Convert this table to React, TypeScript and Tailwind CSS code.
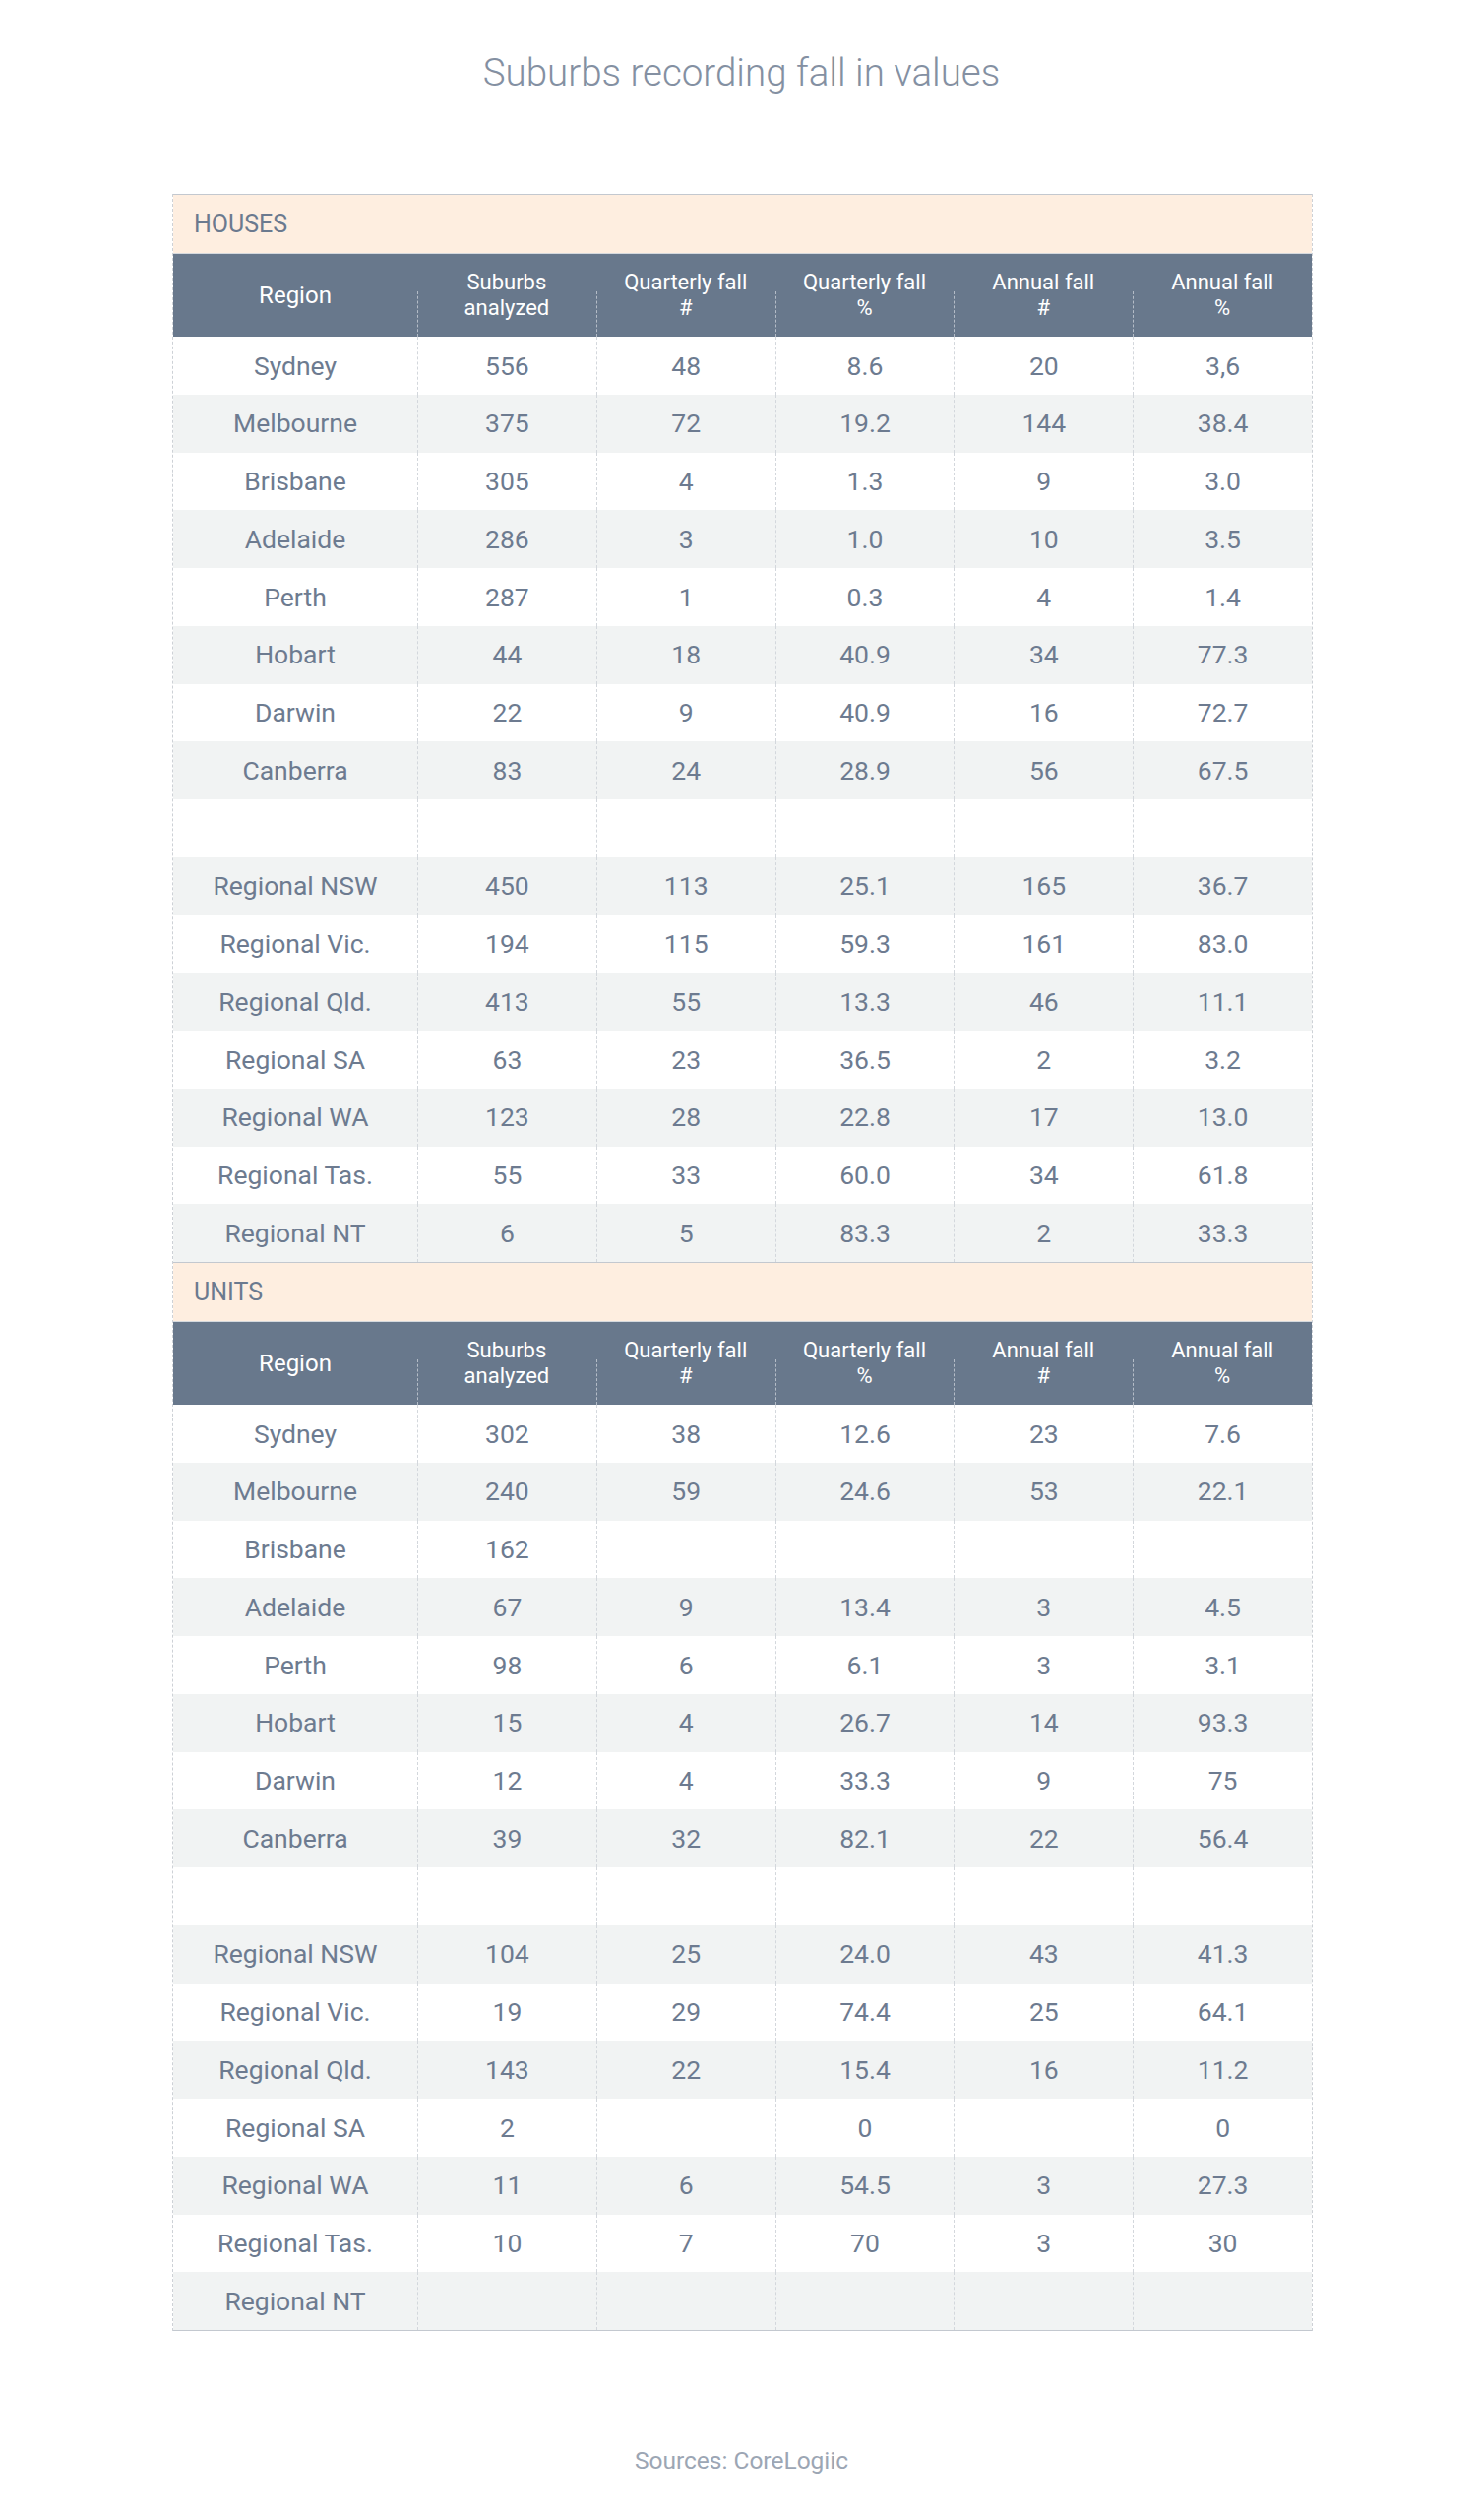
import React from 'react';

type Row = [string, string, string, string, string, string];

const HOUSES: Row[] = [
  ['Sydney', '556', '48', '8.6', '20', '3,6'],
  ['Melbourne', '375', '72', '19.2', '144', '38.4'],
  ['Brisbane', '305', '4', '1.3', '9', '3.0'],
  ['Adelaide', '286', '3', '1.0', '10', '3.5'],
  ['Perth', '287', '1', '0.3', '4', '1.4'],
  ['Hobart', '44', '18', '40.9', '34', '77.3'],
  ['Darwin', '22', '9', '40.9', '16', '72.7'],
  ['Canberra', '83', '24', '28.9', '56', '67.5'],
  ['', '', '', '', '', ''],
  ['Regional NSW', '450', '113', '25.1', '165', '36.7'],
  ['Regional Vic.', '194', '115', '59.3', '161', '83.0'],
  ['Regional Qld.', '413', '55', '13.3', '46', '11.1'],
  ['Regional SA', '63', '23', '36.5', '2', '3.2'],
  ['Regional WA', '123', '28', '22.8', '17', '13.0'],
  ['Regional Tas.', '55', '33', '60.0', '34', '61.8'],
  ['Regional NT', '6', '5', '83.3', '2', '33.3'],
];

const UNITS: Row[] = [
  ['Sydney', '302', '38', '12.6', '23', '7.6'],
  ['Melbourne', '240', '59', '24.6', '53', '22.1'],
  ['Brisbane', '162', '', '', '', ''],
  ['Adelaide', '67', '9', '13.4', '3', '4.5'],
  ['Perth', '98', '6', '6.1', '3', '3.1'],
  ['Hobart', '15', '4', '26.7', '14', '93.3'],
  ['Darwin', '12', '4', '33.3', '9', '75'],
  ['Canberra', '39', '32', '82.1', '22', '56.4'],
  ['', '', '', '', '', ''],
  ['Regional NSW', '104', '25', '24.0', '43', '41.3'],
  ['Regional Vic.', '19', '29', '74.4', '25', '64.1'],
  ['Regional Qld.', '143', '22', '15.4', '16', '11.2'],
  ['Regional SA', '2', '', '0', '', '0'],
  ['Regional WA', '11', '6', '54.5', '3', '27.3'],
  ['Regional Tas.', '10', '7', '70', '3', '30'],
  ['Regional NT', '', '', '', '', ''],
];

const HEADERS: [string, string][] = [
  ['Suburbs', 'analyzed'],
  ['Quarterly fall', '#'],
  ['Quarterly fall', '%'],
  ['Annual fall', '#'],
  ['Annual fall', '%'],
];

function Section({ title, rows }: { title: string; rows: Row[] }) {
  return (
    <div className="border-t border-[#c3c8cf]">
      {/* Section band */}
      <div className="h-[60px] flex items-center pl-[21px] bg-[#feeee0] border-b border-[#d5d9de] text-[25px] text-[#6b7a8f]">
        {title}
      </div>

      {/* Column header */}
      <div className="grid grid-cols-[248px_repeat(5,1fr)] h-[84px] bg-[#68788c] text-white text-[22px] leading-[26px]">
        <div className="flex items-center justify-center text-[24px]">Region</div>
        {HEADERS.map(([a, b], i) => (
          <div
            key={i}
            className="relative flex flex-col items-center justify-center before:absolute before:left-0 before:top-[38px] before:bottom-0 before:border-l before:border-dashed before:border-[#b4bcc7]"
          >
            <span>{a}</span>
            <span>{b}</span>
          </div>
        ))}
      </div>

      {/* Body rows */}
      {rows.map((row, r) => (
        <div
          key={r}
          className={`grid grid-cols-[248px_repeat(5,1fr)] h-[58.75px] text-[26.5px] text-[#6d7b90] ${
            r % 2 === 1 ? 'bg-[#f1f3f3]' : 'bg-white'
          }`}
        >
          {row.map((cell, c) => (
            <div
              key={c}
              className={`flex items-center justify-center ${c > 0 ? 'border-l border-dashed border-[#d3d7dc]' : ''}`}
            >
              {cell}
            </div>
          ))}
        </div>
      ))}
    </div>
  );
}

export default function App() {
  return (
    <div className="w-[1507px] min-h-[2560px] bg-white font-['Roboto','Liberation_Sans',sans-serif]">
      <h1 className="pt-[52px] text-center text-[38.5px] leading-[44px] font-light text-[#8490a2]">
        Suburbs recording fall in values
      </h1>

      <div className="mt-[101px] ml-[175px] w-[1159px] border-x border-dashed border-[#cdd1d6]">
        <Section title="HOUSES" rows={HOUSES} />
        <Section title="UNITS" rows={UNITS} />
        <div className="border-t border-[#c3c8cf]" />
      </div>

      <p className="mt-[118px] text-center text-[24.5px] leading-[28px] text-[#9ca6b4]">Sources: CoreLogiic</p>
    </div>
  );
}
